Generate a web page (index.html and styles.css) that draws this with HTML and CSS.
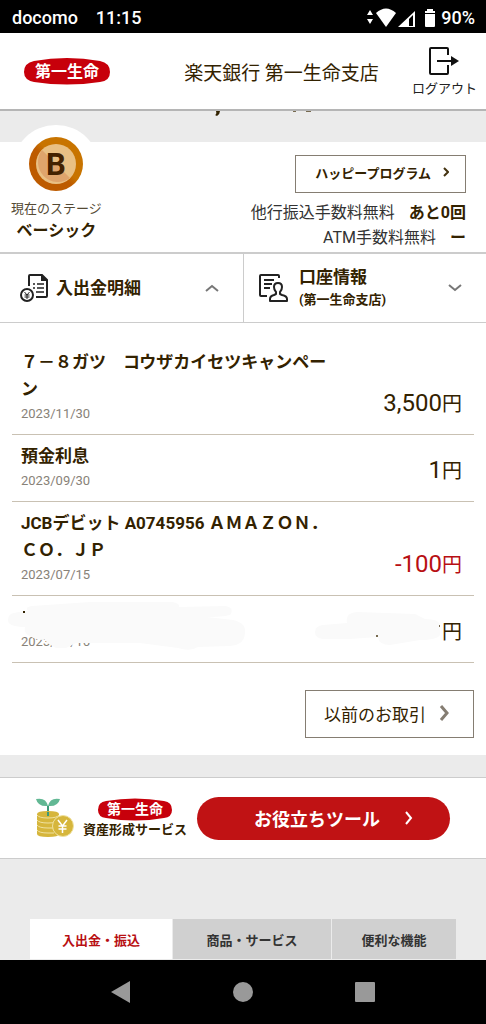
FILE: index.html
```html
<!DOCTYPE html>
<html lang="ja">
<head>
<meta charset="utf-8">
<meta name="viewport" content="width=device-width, initial-scale=1">
<title>楽天銀行 第一生命支店</title>
<link rel="stylesheet" href="styles.css">
</head>
<body>
<div class="status">
  <span>docomo</span><span>11:15</span>
  <div class="status-right">
    <svg width="69" height="20" viewBox="0 0 69 20" fill="#fff" aria-hidden="true">
      <path d="M3 2l3 5H0zM3 16l3-5H0z"/>
      <path d="M9 5q10-9 20 0L19 19z"/>
      <path d="M31 19L48 3v16zM42 11v7h4V7z" fill-rule="evenodd"/>
      <path d="M58 3h2V1h6v2h2v2H58zM58 6h10v12q0 1-1 1h-8q-1 0-1-1z"/>
    </svg>
    <span>90%</span>
  </div>
</div>
<header class="header">
  <svg class="logo" width="88" height="27" viewBox="0 0 88 27" role="img" aria-label="第一生命">
    <path d="M11 3Q44-3 77 3Q87 5 87 14Q87 23 77 24Q44 29 11 24Q1 22 1 14Q1 5 11 3z" fill="#c7000b"/>
    <text class="logo-text" x="44" y="19" font-size="16">第一生命</text>
  </svg>
  <h1>楽天銀行 第一生命支店</h1>
  <a class="logout" href="#">
    <svg width="32" height="30" viewBox="0 0 32 30" fill="none" stroke="#111" stroke-width="2" aria-hidden="true">
      <path d="M20 9V3q0-1-1-1H3Q2 2 2 3v24q0 1 1 1h16q1 0 1-1v-8M9 15h16"/>
      <path d="M23 10l8 5-8 5z" fill="#111" stroke="none"/>
    </svg>
    ログアウト
  </a>
</header>
<main>
  <div class="strip strip-top">
    <svg class="balance" width="100" height="6" viewBox="0 0 100 6" aria-hidden="true">
      <path d="M2 0h4q0 3-3 5l-2-1q2-1 1-4z" fill="#332200"/>
      <path d="M79 0h3v1h-3zM92 0h5v1h-5z" fill="#776a50"/>
    </svg>
  </div>
  <section class="stage">
    <div class="rank">
      <div class="halo">
        <svg width="54" height="54" viewBox="0 0 54 54" aria-hidden="true">
          <defs><linearGradient id="ring" x1="0" y1="1" x2="1" y2="0"><stop offset=".45" stop-color="#bd5b00"/><stop offset=".55" stop-color="#c87400"/></linearGradient></defs>
          <circle cx="27" cy="27" r="27" fill="url(#ring)"/>
          <circle cx="27" cy="27" r="20" fill="#e9c084"/>
          <path d="M13 13A20 20 0 0 0 41 41z" fill="#dfa46c"/>
          <text class="rank-letter" x="27" y="38">B</text>
        </svg>
      </div>
      <span class="rank-label">現在のステージ</span>
      <strong>ベーシック</strong>
    </div>
    <div class="perks">
      <a class="outline small" href="#">ハッピープログラム
        <svg width="6" height="10" viewBox="0 0 6 10" fill="none" stroke="#443311" stroke-width="2" aria-hidden="true"><path d="M1 1l4 4-4 4"/></svg>
      </a>
      <p><span>他行振込手数料無料</span><strong>あと0回</strong></p>
      <p><span>ATM手数料無料</span><strong>ー</strong></p>
    </div>
  </section>
  <div class="panels">
    <button class="panel" type="button" aria-expanded="true">
      <svg width="29" height="30" viewBox="0 0 29 30" fill="none" stroke="#222" stroke-width="2" aria-hidden="true">
        <path d="M9 13V3q0-1 1-1h12l5 5v16q0 1-1 1H16"/>
        <path d="M21 1v7h7z" fill="#222" stroke="none"/>
        <path d="M13 11h2m2 0h7m-11 4h2m2 0h7m-8 4h8" stroke-width="1.5"/>
        <circle cx="7" cy="22" r="6"/>
        <path d="M4.500 19L7 22l2.500-3M7 22v4M4.500 22h5M4.500 24h5" stroke-width="1"/>
      </svg>
      <span class="panel-name">入出金明細</span>
      <svg class="chev" width="14" height="8" viewBox="0 0 14 8" fill="none" stroke="#777" stroke-width="2" aria-hidden="true"><path d="M1 7l6-5 6 5"/></svg>
    </button>
    <button class="panel" type="button" aria-expanded="false">
      <svg width="29" height="30" viewBox="0 0 29 30" fill="none" stroke="#222" stroke-width="2" stroke-linejoin="round" aria-hidden="true">
        <path d="M20 5V3q0-1-1-1H2Q1 2 1 3v19q0 1 1 1h6M5 7h10M5 11h8M5 15h6"/>
        <path d="M11 28v-2q0-3 4-4l2-1v-2q-2-2-2-5 0-4 4-4t4 4q0 3-2 5v2l2 1q5 1 5 4v2z"/>
      </svg>
      <span class="panel-name">口座情報<small>(第一生命支店)</small></span>
      <svg class="chev" width="14" height="8" viewBox="0 0 14 8" fill="none" stroke="#777" stroke-width="2" aria-hidden="true"><path d="M1 1l6 5 6-5"/></svg>
    </button>
  </div>
  <section class="history">
    <ul>
      <li><div class="what"><b>７－８ガツ　コウザカイセツキャンペーン</b><time>2023/11/30</time></div><span class="amount">3,500<i>円</i></span></li>
      <li><div class="what"><b>預金利息</b><time>2023/09/30</time></div><span class="amount">1<i>円</i></span></li>
      <li><div class="what"><b>JCBデビット A0745956 ＡＭＡＺＯＮ．ＣＯ．ＪＰ</b><time>2023/07/15</time></div><span class="amount minus">-100<i>円</i></span></li>
      <li><div class="what"><b>&nbsp;</b><time>2023/06/16</time></div><span class="amount"><i>円</i></span>
        <svg class="smudge smudge-left" width="238" height="56" viewBox="0 0 238 56" aria-hidden="true">
          <path d="M6 17Q14 15 20 15Q16 11 24 10L82 6H164Q172 7 171 11L218 10Q226 12 223 18Q220 21 199 21L225 24Q238 27 237 36Q237 49 222 50L190 51Q182 56 170 52L132 47H68L58 52H48L39 47L37 43L33 44Q14 40 17 31Q0 31 0 24Q0 18 6 17z" fill="#fafafa"/>
          <path d="M15 15h2v2h-2z" fill="#332200"/>
        </svg>
        <svg class="smudge smudge-right" width="126" height="36" viewBox="0 0 126 36" aria-hidden="true">
          <path d="M8 14L32 12Q30 2 42 1L100 3L110 8Q125 8 125 15V24Q122 29 105 29L75 34Q64 34 63 26L35 28H8Q0 27 0 21Q0 15 8 14z" fill="#fafafa"/>
          <path d="M61 24h2v2h-2zM124 14h1v2h-1z" fill="#776a50"/>
        </svg>
      </li>
    </ul>
    <a class="outline large" href="#">以前のお取引
      <svg width="10" height="16" viewBox="0 0 10 16" fill="none" stroke="#857d72" stroke-width="3" aria-hidden="true"><path d="M2 1l6 7-6 7"/></svg>
    </a>
  </section>
  <div class="strip strip-mid"></div>
  <section class="service">
    <svg width="38" height="41" viewBox="0 0 38 41" fill="none" aria-hidden="true">
      <path d="M12 17V8" stroke="#3b9a78" stroke-width="2"/>
      <path d="M12 8Q2 9 0 1q10-2 12 7zM12 8Q14-1 24 1q-2 8-12 7z" fill="#62b894"/>
      <path d="M1 16q0-3 11-3t11 3v20q0 3-11 3T1 36z" fill="#d6b63c"/>
      <path d="M12 14v4" stroke="#3b9a78" stroke-width="2"/>
      <path d="M1 17q2 3 11 3t11-3M1 22q2 3 11 3t11-3M1 27q2 3 11 3h6M1 32q2 3 11 3h6" stroke="#f0e2a0" stroke-width="1"/>
      <circle cx="27" cy="28" r="10.500" fill="#d6b63c" stroke="#f0e2a0"/>
      <path d="M22 22l4.500 6 4.500-6M26.500 28v7M22.500 28h8M22.500 31h8" stroke="#fff" stroke-width="1.500"/>
    </svg>
    <div class="service-name">
      <svg width="76" height="23" viewBox="0 0 76 23" role="img" aria-label="第一生命">
        <path d="M9 3Q38-2 67 3Q75 4 75 12Q75 19 67 20Q38 25 9 20Q1 19 1 12Q1 4 9 3z" fill="#c7000b"/>
        <text class="logo-text" x="38" y="16" font-size="14">第一生命</text>
      </svg>
      <span>資産形成サービス</span>
    </div>
    <a class="tool" href="#">お役立ちツール
      <svg width="9" height="14" viewBox="0 0 9 14" fill="none" stroke="#fff" stroke-width="2" aria-hidden="true"><path d="M2 1l5 6-5 6"/></svg>
    </a>
  </section>
  <div class="tabs">
    <button class="tab current" type="button">入出金・振込</button>
    <button class="tab" type="button">商品・サービス</button>
    <button class="tab" type="button">便利な機能</button>
  </div>
</main>
<nav class="system">
  <button type="button" aria-label="戻る"><svg width="22" height="24" viewBox="0 0 22 24"><path d="M1 12L20 1v22z" fill="#999"/></svg></button>
  <button type="button" aria-label="ホーム"><svg width="22" height="24" viewBox="0 0 22 24"><circle cx="11" cy="12" r="10" fill="#999"/></svg></button>
  <button type="button" aria-label="履歴"><svg width="22" height="24" viewBox="0 0 22 24"><rect x="1" y="2" width="20" height="20" rx="1" fill="#999"/></svg></button>
</nav>
</body>
</html>
```

FILE: styles.css
```css
* { box-sizing: border-box; }
body {
  margin: 0;
  min-height: 100vh;
  display: flex;
  flex-direction: column;
  background: #ebebeb;
  color: #332200;
  font-family: Roboto, "Noto Sans CJK JP", sans-serif;
  font-size: 13px;
}
svg { display: block; flex: none; }
a { color: inherit; text-decoration: none; }
button { border: 0; padding: 0; margin: 0; background: none; color: inherit; font: inherit; }
p, h1, ul { margin: 0; padding: 0; }

.status {
  display: flex;
  align-items: center;
  gap: 18px;
  height: 33px;
  padding: 2px 11px 0 12px;
  background: #000;
  color: #fff;
  font-size: 18px;
  font-weight: 500;
}
.status-right { margin-left: auto; display: flex; align-items: center; gap: 5px; }

.header {
  display: flex;
  align-items: center;
  justify-content: space-between;
  height: 78px;
  padding: 0 9px 0 23px;
  background: #fff;
  border-bottom: 2px solid #b5b5b5;
}
.header h1 { margin-left: 40px; font-size: 19px; font-weight: 400; }
.logo-text { fill: #fff; font-weight: 700; text-anchor: middle; }
.logout {
  display: flex;
  flex-direction: column;
  align-items: center;
  gap: 4px;
  padding-top: 2px;
  color: #222;
  line-height: 18px;
}

main { flex: 1; }
.strip-top { height: 31px; }
.balance { margin-left: 44%; }
.strip-mid { height: 22px; }

.stage {
  display: flex;
  justify-content: space-between;
  padding: 0 20px 0 11px;
  background: #fff;
  border-bottom: 2px solid #ccc;
}
.rank { display: flex; flex-direction: column; align-items: center; height: 110px; line-height: 22px; }
.halo {
  flex: none;
  width: 88px;
  height: 88px;
  margin-top: -17px;
  padding: 12px 17px;
  border-radius: 50%;
  background: #fff;
}
.rank-letter { font-size: 31px; font-weight: 700; text-anchor: middle; fill: #442200; }
.rank-label { margin-top: -15px; color: #554a35; }
.rank strong { font-size: 16px; }
.perks { padding-top: 13px; display: flex; flex-direction: column; align-items: flex-end; }
.perks p { display: flex; gap: 14px; color: #333; font-size: 16px; line-height: 25px; }
.perks strong { color: #332200; }
.outline { display: flex; align-items: center; border: 1px solid #857d72; }
.small { gap: 12px; height: 38px; margin-bottom: 7px; padding: 0 16px 4px 19px; font-weight: 700; }
.large { gap: 13px; width: max-content; height: 48px; margin: 27px 12px 0 auto; padding: 0 24px 2px 18px; font-size: 17px; }

.panels { display: grid; grid-template-columns: 1fr 1fr; background: #fff; border-bottom: 1px solid #ccc; }
.panel { display: flex; align-items: center; gap: 7px; height: 68px; padding: 0 24px 0 20px; text-align: left; }
.panel + .panel { gap: 11px; padding-left: 15px; border-left: 1px solid #ccc; }
.panel-name { font-size: 17px; font-weight: 700; line-height: 24px; }
.panel-name small { display: block; font-size: 13px; line-height: 22px; }
.chev { margin-left: auto; }

.history { padding: 18px 0 17px; background: #fff; }
.history ul { margin: 0 12px; list-style: none; }
.history li {
  position: relative;
  display: flex;
  align-items: flex-end;
  justify-content: space-between;
  padding: 8px 12px 9px 9px;
  border-bottom: 1px solid #c9c1b3;
}
.what { width: 72%; }
.what b { display: block; font-size: 17px; line-height: 27px; }
.what time { display: block; color: #888278; line-height: 22px; }
.amount { padding-bottom: 6px; font-size: 24px; line-height: 30px; }
.amount i { font-size: 20px; font-style: normal; }
.minus { color: #b80f13; }
.smudge { position: absolute; }
.smudge-left { left: -4px; top: 0; }
.smudge-right { right: 33px; top: 15px; }

.service {
  display: flex;
  align-items: center;
  height: 82px;
  padding: 0 36px;
  background: #fff;
  border: solid #ccc;
  border-width: 1px 0;
}
.service-name { display: flex; flex-direction: column; align-items: center; margin: 0 10px 0 9px; font-weight: 700; line-height: 18px; white-space: nowrap; }
.tool {
  flex: 1;
  display: flex;
  align-items: center;
  justify-content: center;
  gap: 24px;
  height: 43px;
  padding-left: 20px;
  border-radius: 22px;
  background: #c01214;
  color: #fff;
  font-size: 18px;
  font-weight: 700;
}

.tabs { display: grid; grid-template-columns: 142fr 158fr 124fr; gap: 1px; margin: 60px 30px 0; }
.tab { height: 40px; background: #d0d0d0; color: #333; font-weight: 700; }
.current { background: #fff; color: #b80f13; }

.system { display: flex; justify-content: space-around; align-items: center; height: 64px; padding: 0 60px; background: #000; }
```
